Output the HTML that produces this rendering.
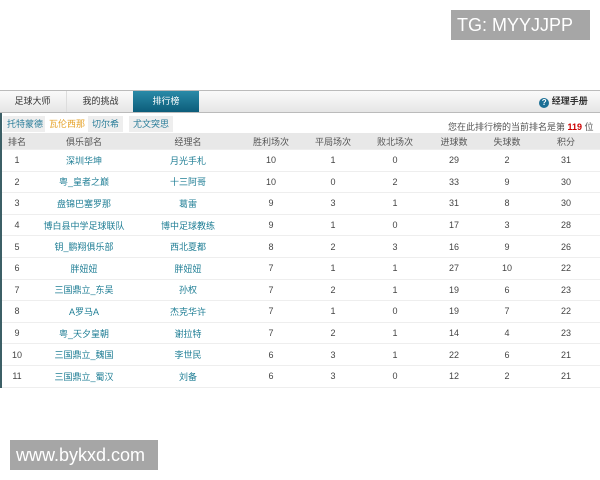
<!DOCTYPE html><html><head><meta charset="utf-8"><style>
body{margin:0;width:600px;height:480px;background:#fff;font-family:"Liberation Sans","Noto Sans CJK SC",sans-serif;position:relative;overflow:hidden;font-size:9px;color:#444}
.abs{position:absolute}
.nav{left:0;top:90px;width:600px;height:21px;background:linear-gradient(#fafafa,#e6e6e6);border-top:1px solid #bbb;border-bottom:1px solid #bbb}
.tab{position:absolute;top:0;height:21px;line-height:21px;text-align:center;color:#333}
.act{background:linear-gradient(#2a8aa8,#0c5d7a);color:#fff}
.sub{top:116px;height:16px;line-height:16px;padding:0 4px;background:#eee;color:#2a7d99}
table{position:absolute;left:2px;top:133px;width:598px;border-collapse:collapse}
td,th{text-align:center;height:20.6px;padding:0;font-weight:normal;border-bottom:1px solid #eee}
th{height:16px;background:#e8e8e8;color:#555}
td.l{color:#1f7e95}
.wm{background:#a6a6a6;color:#fff;font-size:18px;line-height:30px;padding-left:6px}
</style></head><body>
<div class="abs" style="left:0;top:90px;width:2px;height:298px;background:#3c5f66"></div>
<div class="abs nav">
<div class="tab" style="left:0;width:65px">足球大师</div>
<div class="tab" style="left:66px;width:67px;border-left:1px solid #ddd">我的挑战</div>
<div class="tab act" style="left:133px;width:66px">排行榜</div>
<div class="tab" style="left:531px;width:65px;font-weight:bold"><span style="display:inline-block;width:10px;height:10px;border-radius:50%;background:#1b6f95;color:#fff;font-size:8px;line-height:10px;vertical-align:-1px">?</span> 经理手册</div>
</div>
<div class="abs sub" style="left:3px">托特蒙德</div>
<div class="abs sub" style="left:45px;background:#fff;color:#e5a126">瓦伦西那</div>
<div class="abs sub" style="left:88px">切尔希</div>
<div class="abs sub" style="left:129px">尤文突思</div>
<div class="abs" style="left:448px;top:120px;color:#555">您在此排行榜的当前排名是第 <b style="color:#c00">119</b> 位</div>
<table>
<colgroup><col style="width:30px"><col style="width:104px"><col style="width:104px"><col style="width:62px"><col style="width:62px"><col style="width:62px"><col style="width:56px"><col style="width:50px"><col></colgroup>
<tr><th>排名</th><th>俱乐部名</th><th>经理名</th><th>胜利场次</th><th>平局场次</th><th>败北场次</th><th>进球数</th><th>失球数</th><th>积分</th></tr>
<tr><td>1</td><td class="l">深圳华坤</td><td class="l">月光手札</td><td>10</td><td>1</td><td>0</td><td>29</td><td>2</td><td>31</td></tr>
<tr><td>2</td><td class="l">粤_皇者之巅</td><td class="l">十三阿哥</td><td>10</td><td>0</td><td>2</td><td>33</td><td>9</td><td>30</td></tr>
<tr><td>3</td><td class="l">盘锦巴塞罗那</td><td class="l">葛雷</td><td>9</td><td>3</td><td>1</td><td>31</td><td>8</td><td>30</td></tr>
<tr><td>4</td><td class="l">博白县中学足球联队</td><td class="l">博中足球教练</td><td>9</td><td>1</td><td>0</td><td>17</td><td>3</td><td>28</td></tr>
<tr><td>5</td><td class="l">钥_鹏翔俱乐部</td><td class="l">西北夏都</td><td>8</td><td>2</td><td>3</td><td>16</td><td>9</td><td>26</td></tr>
<tr><td>6</td><td class="l">胖妞妞</td><td class="l">胖妞妞</td><td>7</td><td>1</td><td>1</td><td>27</td><td>10</td><td>22</td></tr>
<tr><td>7</td><td class="l">三国鼎立_东吴</td><td class="l">孙权</td><td>7</td><td>2</td><td>1</td><td>19</td><td>6</td><td>23</td></tr>
<tr><td>8</td><td class="l">A罗马A</td><td class="l">杰克华许</td><td>7</td><td>1</td><td>0</td><td>19</td><td>7</td><td>22</td></tr>
<tr><td>9</td><td class="l">粤_天夕皇朝</td><td class="l">谢拉特</td><td>7</td><td>2</td><td>1</td><td>14</td><td>4</td><td>23</td></tr>
<tr><td>10</td><td class="l">三国鼎立_魏国</td><td class="l">李世民</td><td>6</td><td>3</td><td>1</td><td>22</td><td>6</td><td>21</td></tr>
<tr><td>11</td><td class="l">三国鼎立_蜀汉</td><td class="l">刘备</td><td>6</td><td>3</td><td>0</td><td>12</td><td>2</td><td>21</td></tr>
</table>
<div class="abs wm" style="left:451px;top:10px;width:133px;height:30px">TG: MYYJJPP</div>
<div class="abs wm" style="left:10px;top:440px;width:142px;height:30px">www.bykxd.com</div>
</body></html>
